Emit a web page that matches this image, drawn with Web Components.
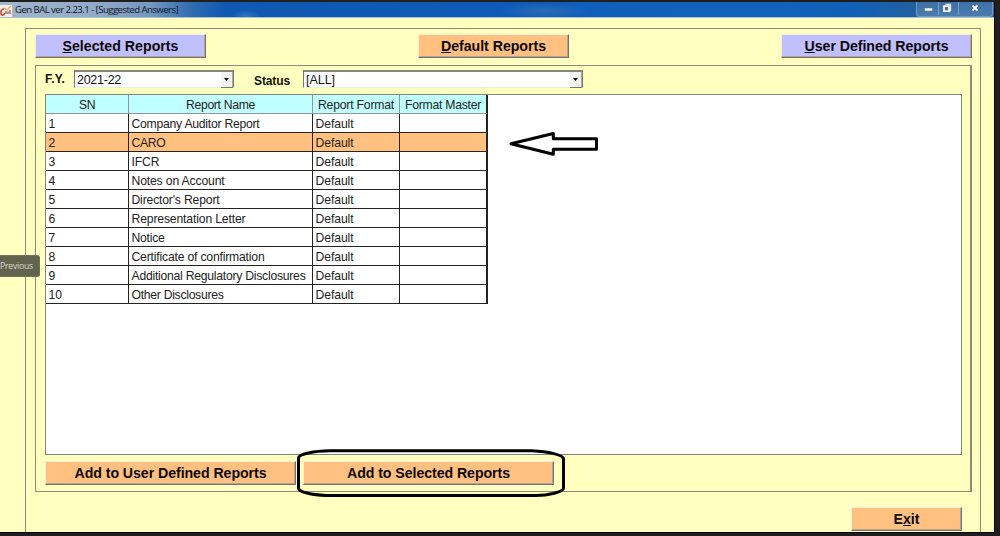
<!DOCTYPE html>
<html lang="en">
<head>
<meta charset="utf-8">
<title>Gen BAL</title>
<style>
html,body{margin:0;height:536px;overflow:hidden;background:#211f1e}
body{font-family:"Liberation Sans",Arial,sans-serif;color:#111}
</style>
</head>
<body>
<gb-window></gb-window>
<script>
const shadow = (el, html) => {
  const t = document.createElement('template');
  t.innerHTML = html;
  el.attachShadow({mode:'open'}).append(t.content.cloneNode(true));
};

/* One line of text whose tracking is set so it spans the given width. */
class FitText extends HTMLElement {
  connectedCallback() {
    if (!this.shadowRoot) shadow(this, `<style>:host{display:inline-block;white-space:pre}span{display:inline-block}</style><span><slot></slot></span>`);
    const s = this.shadowRoot.querySelector('span');
    const w = +this.getAttribute('w'), n = this.textContent.length;
    if (w) {
      const d = (w - s.getBoundingClientRect().width) / n;
      s.style.letterSpacing = d + 'px';
    }
  }
}

class GbButton extends HTMLElement {
  connectedCallback() {
    shadow(this, `<style>
      :host{display:flex;align-items:center;justify-content:center;box-sizing:border-box;height:24px;background:var(--face,#ffc080);
        border:1px solid;border-color:#f5eed6 #77736c #77736c #f5eed6;box-shadow:inset -1px -1px #b2a49a;
        font:bold 14.2px/20px "Liberation Sans",Arial,sans-serif;color:#0c0806}
      </style><slot></slot>`);
  }
}

class GbCombo extends HTMLElement {
  connectedCallback() {
    shadow(this, `<style>
      :host{display:flex;box-sizing:border-box;height:18px;background:#fff;border:1px solid #77776f;border-top:2px solid #85857e;border-bottom-color:#eeeedf;font-size:12.5px;line-height:17px}
      .v{flex:1;padding-left:2px}
      .b{width:11px;margin-bottom:-1px;background:#f2f2f0;border-right:1px solid #aaa;border-bottom:1px solid #77776f;display:flex;align-items:center;justify-content:center}
      </style><div class="v"><slot></slot></div><div class="b"><svg width="5" height="3" viewBox="0 0 5 3"><path d="M0 0H5L2.5 3Z" fill="#000"/></svg></div>`);
  }
}

class GbTitlebar extends HTMLElement {
  connectedCallback() {
    shadow(this, `<style>
      :host{display:flex;box-sizing:border-box;height:16px;border-bottom:1px solid #a4c2d8;
        background:radial-gradient(ellipse 45px 8px at 545px 9px,#2c6db5 0,#2c6db500 100%),radial-gradient(ellipse 14px 6px at 246px 14px,#3474be 0,#3474be00 100%),
        linear-gradient(90deg,#a3b6cc 0,#93abc8 90px,#7697c0 150px,#2f6bb0 192px,#1059b2 225px,#0d5ab8 480px,#1262bd 700px,#1160b8 850px,#225f9f 915px,#31659c 994px)}
      .icon{width:13px;flex:none;margin-top:3px;height:12px}
      .t{flex:1;font:9.6px/15px "Open Sans","Noto Sans",sans-serif;color:#10161f;padding:0 0 0 2px}
      .c{display:flex;height:14px;margin-right:1px;border:1px solid #7096c1;border-top:0;border-radius:0 0 3px 3px;background:linear-gradient(#3d70a9,#4c7cad)}
      .c svg{display:block}
      </style>
      <svg class="icon" viewBox="0 0 13 12"><rect x="0" y="0" width="12" height="12" fill="#f6eee8"/><path d="M4 4C1.500 4 0.500 6 1 8.500S4 10.500 4.500 8" fill="none" stroke="#c8452c" stroke-width="1.500"/><path d="M6 9V6M8 9V6.500M10 9V5" stroke="#8d5950" stroke-width="1.200"/><path d="M4 3L7 5L11 1" fill="none" stroke="#f2a35d" stroke-width="1.300"/></svg>
      <div class="t"><fit-text w="163">Gen BAL ver 2.23.1 - [Suggested Answers]</fit-text></div>
      <div class="c"><svg width="75" height="13" viewBox="0 0 75 13"><path d="M21.500 0V13M41.500 0V13" stroke="#7c9fc5"/>
        <rect x="7.500" y="6" width="8" height="3" fill="#fff" stroke="#5b6b80" stroke-width=".6"/>
        <path d="M28.500 2.500H33.500V8.500H31" fill="none" stroke="#e8eef5" stroke-width="1.300"/><rect x="27" y="4.200" width="5" height="5" fill="#5a6b80" stroke="#fff" stroke-width="1.700"/>
        <path d="M55.500 3.500L60.500 8.500M60.500 3.500L55.500 8.500" stroke="#4d5d72" stroke-width="3.600"/><path d="M55.500 3.500L60.500 8.500M60.500 3.500L55.500 8.500" stroke="#fff" stroke-width="2"/></svg></div>`);
  }
}

class GbTable extends HTMLElement {
  connectedCallback() {
    const rows = [['Company Auditor Report',128],['CARO',34],['IFCR',28],['Notes on Account',93],["Director's Report",88],['Representation Letter',114],['Notice',33],['Certificate of confirmation',133],['Additional Regulatory Disclosures',174],['Other Disclosures',92]];
    const body = rows.map(([n,w],i) => `<div class="r${i===1?' sel':''}"><div><fit-text w="${i===9?13.5:7}">${i+1}</fit-text></div><div><fit-text w="${w}">${n}</fit-text></div><div><fit-text w="38">Default</fit-text></div><div></div></div>`).join('');
    shadow(this, `<style>
      :host{display:block;width:442px;font-size:12.2px;color:#222}
      .r{display:grid;grid-template-columns:83px 184px 87px 88px;height:19px;line-height:20px;box-sizing:border-box}
      .r>div{box-sizing:border-box;height:19px;border-right:1px solid #26221f;border-bottom:1px solid #26221f;padding-left:2.500px;overflow:hidden;white-space:nowrap}
      .h>div{background:#c0ffff;border-color:#8c9696;text-align:center;padding:0}
      .r>div:last-child{border-right:2px solid #26221f}
      .sel{background:#ffc080}
      .r:last-child>div{border-bottom-width:1.5px}
      fit-text{vertical-align:top}
      </style>
      <div class="r h"><div><fit-text w="16">SN</fit-text></div><div><fit-text w="69">Report Name</fit-text></div><div><fit-text w="76">Report Format</fit-text></div><div><fit-text w="76">Format Master</fit-text></div></div>${body}`);
  }
}

class GbWindow extends HTMLElement {
  connectedCallback() {
    shadow(this, `<style>
      :host{display:block;position:relative;width:1000px;height:536px;overflow:hidden;background:#211f1e;padding-top:2px;box-sizing:border-box}
      .win{width:994px;height:530px;background:#ffffc0;display:flex;flex-direction:column;border-right:1px solid #0a0a08;border-bottom:1px solid #050505}
      .outer{flex:1;margin:10px 13px 0 25px;border:1px solid #8c8c7c;border-bottom:0;padding:5px 8px 0 9px;display:flex;flex-direction:column}
      .tabs{display:flex;justify-content:space-between;height:24px}
      .tabs gb-button{width:171px}.tabs .d{width:151px}.tabs .u{width:191px}
      .lav{--face:#c0c0ff}
      .inner{margin-top:7px;box-sizing:border-box;height:427px;width:937px;border:1px solid #8c8c7c;border-right-width:2px;padding:4px 8px 0 9px}
      .filters{display:flex;align-items:center;height:18px}
      .lab{font-weight:bold;font-size:12px;line-height:18px}
      .panel{margin-top:6px;height:359px;width:915px;border:1px solid #85857b;background:#fff}
      .acts{display:flex;gap:7px;margin-top:6px}.acts gb-button{width:251px}
      .exit{align-self:flex-end;width:111px;margin:15px 10px 0 0}
      .prev{position:absolute;left:0;top:255px;width:40px;height:22px;box-sizing:border-box;border-radius:0 3px 3px 0;background:#62634e;border:1px solid #6f705c;border-left:0;color:#d9d9cc;font:8.6px/20px "Open Sans",sans-serif}
      .mark{position:absolute;left:0;top:0}
      </style>
      <div class="win">
        <gb-titlebar></gb-titlebar>
        <div class="outer">
          <div class="tabs"><gb-button class="lav"><fit-text w="116"><u>S</u>elected Reports</fit-text></gb-button><gb-button class="d"><fit-text w="105"><u>D</u>efault Reports</fit-text></gb-button><gb-button class="lav u"><fit-text w="144"><u>U</u>ser Defined Reports</fit-text></gb-button></div>
          <div class="inner">
            <div class="filters"><span class="lab" style="width:29px"><fit-text w="20">F.Y.</fit-text></span><gb-combo style="width:160px"><fit-text w="44">2021-22</fit-text></gb-combo><span class="lab" style="width:49px;padding:3px 0 0 20px"><fit-text w="36">Status</fit-text></span><gb-combo style="width:280px"><fit-text w="29">[ALL]</fit-text></gb-combo></div>
            <div class="panel"><gb-table></gb-table></div>
            <div class="acts"><gb-button><fit-text w="192">Add to User Defined Reports</fit-text></gb-button><gb-button><fit-text w="163">Add to Selected Reports</fit-text></gb-button></div>
          </div>
          <gb-button class="exit"><fit-text w="26">E<u>x</u>it</fit-text></gb-button>
        </div>
      </div>
      <div class="prev"><fit-text w="33">Previous</fit-text></div>
      <svg class="mark" width="1000" height="536" fill="none" stroke="#000">
        <path d="M511 143.700L553.300 133.500V138.700H596.500V149.300H553.300V154.200Z" stroke-width="3" stroke-linejoin="round"/>
        <path d="M330 450.800H532C548 451.500 563.500 455 563.500 459V488C563.500 492 548 495.500 536 495.500H326C312 495 298.500 492 298.500 488V458C298.500 454 314 451 330 450.800Z" stroke-width="3"/>
      </svg>`);
  }
}
customElements.define('fit-text', FitText);
customElements.define('gb-button', GbButton);
customElements.define('gb-combo', GbCombo);
customElements.define('gb-titlebar', GbTitlebar);
customElements.define('gb-table', GbTable);
customElements.define('gb-window', GbWindow);
</script>
</body>
</html>
